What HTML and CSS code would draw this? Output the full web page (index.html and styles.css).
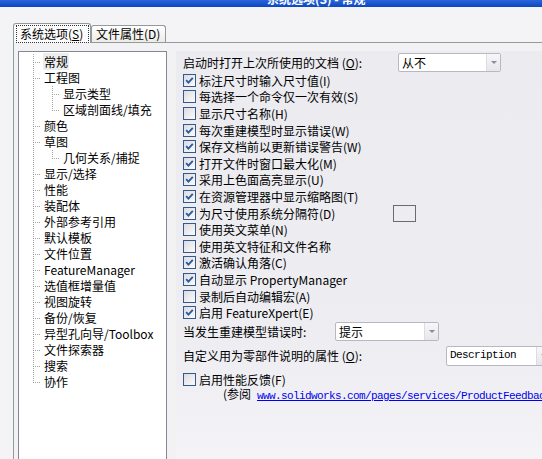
FILE: index.html
```html
<!DOCTYPE html>
<html lang="zh-CN">
<head>
    <meta charset="UTF-8">
    <title>系统选项(S) - 常规</title>
    <link rel="stylesheet" href="styles.css">
</head>
<body>
    <div class="titlebar"><span>系统选项(S) - 常规</span></div>

    <div class="dialog">
        <div class="tabs">
            <div class="tab active"><span class="focus">系统选项(<u>S</u>)</span></div>
            <div class="tab">文件属性(D)</div>
        </div>

        <div class="page">
            <div class="tree">
                <div class="node"><span class="sel">常规</span></div>
                <div class="node">工程图</div>
                <div class="node sub">显示类型</div>
                <div class="node sub sub-last">区域剖面线/填充</div>
                <div class="node">颜色</div>
                <div class="node">草图</div>
                <div class="node sub sub-last">几何关系/捕捉</div>
                <div class="node">显示/选择</div>
                <div class="node">性能</div>
                <div class="node">装配体</div>
                <div class="node">外部参考引用</div>
                <div class="node">默认模板</div>
                <div class="node">文件位置</div>
                <div class="node">FeatureManager</div>
                <div class="node">选值框增量值</div>
                <div class="node">视图旋转</div>
                <div class="node">备份/恢复</div>
                <div class="node">异型孔向导/Toolbox</div>
                <div class="node">文件探索器</div>
                <div class="node">搜索</div>
                <div class="node last">协作</div>
            </div>

            <div class="options">
                <div class="field first">
                    <span class="field-label w-open">启动时打开上次所使用的文档 (<u>O</u>):</span>
                    <div class="combo w-103"><span class="value">从不</span><span class="btn"><i></i></span></div>
                </div>

                <div class="check-list">
                    <div class="check on"><span class="box"></span>标注尺寸时输入尺寸值(I)</div>
                    <div class="check"><span class="box"></span>每选择一个命令仅一次有效(S)</div>
                    <div class="check"><span class="box"></span>显示尺寸名称(H)</div>
                    <div class="check on"><span class="box"></span>每次重建模型时显示错误(W)</div>
                    <div class="check on"><span class="box"></span>保存文档前以更新错误警告(W)</div>
                    <div class="check on"><span class="box"></span>打开文件时窗口最大化(M)</div>
                    <div class="check on"><span class="box"></span>采用上色面高亮显示(U)</div>
                    <div class="check on"><span class="box"></span>在资源管理器中显示缩略图(T)</div>
                    <div class="check on"><span class="box"></span><span class="w-sep">为尺寸使用系统分隔符(D)</span><span class="swatch"></span></div>
                    <div class="check"><span class="box"></span>使用英文菜单(N)</div>
                    <div class="check"><span class="box"></span>使用英文特征和文件名称</div>
                    <div class="check on"><span class="box"></span>激活确认角落(C)</div>
                    <div class="check on"><span class="box"></span>自动显示 PropertyManager</div>
                    <div class="check"><span class="box"></span>录制后自动编辑宏(A)</div>
                    <div class="check on"><span class="box"></span>启用 FeatureXpert(E)</div>
                </div>

                <div class="field rebuild">
                    <span class="field-label w-rebuild">当发生重建模型错误时:</span>
                    <div class="combo w-104"><span class="value">提示</span><span class="btn"><i></i></span></div>
                </div>

                <div class="field descr">
                    <span class="field-label w-descr">自定义用为零部件说明的属性 (<u>O</u>):</span>
                    <div class="combo tall w-105"><span class="value mono">Description</span><span class="btn"><i></i></span></div>
                </div>

                <div class="check feedback"><span class="box"></span>启用性能反馈(F)</div>
                <div class="ref"><span class="ref-label">(参阅</span><a class="mono" href="#">www.solidworks.com/pages/services/ProductFeedback</a></div>
            </div>
        </div>
    </div>
</body>
</html>
```

FILE: styles.css
```css
body {
    margin: 0;
    width: 542px;
    height: 459px;
    overflow: hidden;
    background: #f4f4f7;
    font-family: "Noto Sans CJK SC", sans-serif;
    font-size: 12px;
    color: #000;
    white-space: nowrap;
}

.titlebar {
    height: 7px;
    overflow: hidden;
    padding-left: 267px;
    background: linear-gradient(to bottom, #2b64d9, #0b47c2);
    color: #fff;
    font-weight: bold;
}

.titlebar span {
    display: block;
    line-height: 14px;
    margin-top: -8px;
}

.dialog {
    padding: 16px 0 0 13px;
}

/* tab strip */
.tabs {
    display: flex;
    align-items: flex-end;
    height: 19px;
}

.tab {
    height: 16px;
    width: 69px;
    border: 1px solid #919b9c;
    border-bottom: none;
    border-radius: 3px 3px 0 0;
    background: linear-gradient(to bottom, #fff, #ecebe6);
    line-height: 16px;
    padding-left: 4px;
    box-sizing: content-box;
}

.tab.active {
    position: relative;
    width: 76px;
    height: 19px;
    margin-bottom: -1px;
    padding-left: 0;
    background: #fbfbfc;
}

.focus {
    display: block;
    margin: 1px 1px 0 2px;
    height: 16px;
    line-height: 16px;
    padding-left: 3px;
    border: 1px dotted #333;
}

.page {
    display: flex;
    align-items: flex-start;
    border-top: 1px solid #919b9c;
    border-left: 1px solid #919b9c;
    background: #f2f2f4;
    padding: 8px 0 0 4px;
    height: 420px;
}

/* tree view */
.tree {
    --vdot: repeating-linear-gradient(to bottom, #a4a4a4 0 1px, transparent 1px 2px);
    --hdot: repeating-linear-gradient(to right, #a4a4a4 0 1px, transparent 1px 2px);
    flex: none;
    width: 147px;
    height: 420px;
    border: 1px solid #828790;
    background: #fff;
    padding-top: 2px;
    box-sizing: content-box;
    overflow: hidden;
}

.node {
    height: 16px;
    line-height: 16px;
    padding-left: 25px;
    background:
        var(--hdot) 14px 8px / 8px 1px no-repeat,
        var(--vdot) 14px 0 / 1px 100% no-repeat;
}

.node.last {
    background:
        var(--hdot) 14px 8px / 8px 1px no-repeat,
        var(--vdot) 14px 0 / 1px 9px no-repeat;
}

.node.sub {
    padding-left: 44px;
    background:
        var(--hdot) 33px 8px / 8px 1px no-repeat,
        var(--vdot) 33px 0 / 1px 100% no-repeat,
        var(--vdot) 14px 0 / 1px 100% no-repeat;
}

.node.sub-last {
    background:
        var(--hdot) 33px 8px / 8px 1px no-repeat,
        var(--vdot) 33px 0 / 1px 9px no-repeat,
        var(--vdot) 14px 0 / 1px 100% no-repeat;
}

.sel {
    background: #ededed;
    padding: 0 1px;
    margin-left: -1px;
}

/* right side */
.options {
    flex: 1;
    min-width: 0;
    overflow: hidden;
    margin-left: 9px;
    padding-left: 7px;
    height: 420px;
    background: linear-gradient(to bottom, #ebebf0, #ededf2 70%, #f5f5f8);
}

.field {
    display: flex;
    align-items: center;
}

.field.first {
    margin-top: 2px;
    height: 19px;
}

.field.rebuild {
    margin-top: 2px;
    height: 17px;
}

.field.descr {
    margin-top: 6px;
    height: 20px;
}

.field-label { flex: none; }
.w-open { width: 215px; }
.w-rebuild { width: 152px; }
.w-descr { width: 263px; }

.combo {
    flex: none;
    display: flex;
    height: 17px;
    border: 1px solid #b6b9c4;
    border-radius: 2px;
    background: #fff;
}

.combo.tall { height: 18px; }
.w-103 { width: 101px; }
.w-104 { width: 102px; }
.w-105 { width: 103px; }

.combo .value {
    flex: 1;
    padding-left: 3px;
    line-height: 17px;
}

.combo .btn {
    width: 13px;
    border-left: 1px solid #dcdce2;
    background: linear-gradient(to bottom, #f7f7f9, #e6e6eb);
    display: flex;
    align-items: center;
    justify-content: center;
}

.combo .btn i {
    width: 0;
    height: 0;
    border-left: 3px solid transparent;
    border-right: 3px solid transparent;
    border-top: 3px solid #8a8c98;
}

.mono {
    font-family: "Liberation Mono", monospace;
    font-size: 11px;
    letter-spacing: -0.6px;
}

.check-list .check {
    height: 16.6px;
}

.check {
    display: flex;
    align-items: center;
}

.box {
    flex: none;
    width: 11px;
    height: 11px;
    margin-right: 3px;
    border: 1px solid #34598c;
    background: linear-gradient(135deg, #dcdce0, #fbfbfc);
}

.check.on .box {
    background:
        url("data:image/svg+xml,%3Csvg xmlns='http://www.w3.org/2000/svg' width='11' height='11'%3E%3Cpath d='M2.2 5.2 L4.4 7.6 L8.8 2.8' fill='none' stroke='%232a5aa0' stroke-width='1.9'/%3E%3C/svg%3E") center / 11px 11px no-repeat,
        linear-gradient(135deg, #dcdce0, #fbfbfc);
}

.w-sep {
    width: 194px;
}

.swatch {
    width: 21px;
    height: 15px;
    border: 1px solid #6b6b6f;
}

.check.feedback {
    margin-top: 6px;
    height: 15px;
}

.ref {
    height: 13px;
    line-height: 13px;
    padding-left: 40px;
}

.ref-label {
    display: inline-block;
    width: 34px;
}

.ref a {
    color: #0000ee;
    text-decoration: underline;
}
```
